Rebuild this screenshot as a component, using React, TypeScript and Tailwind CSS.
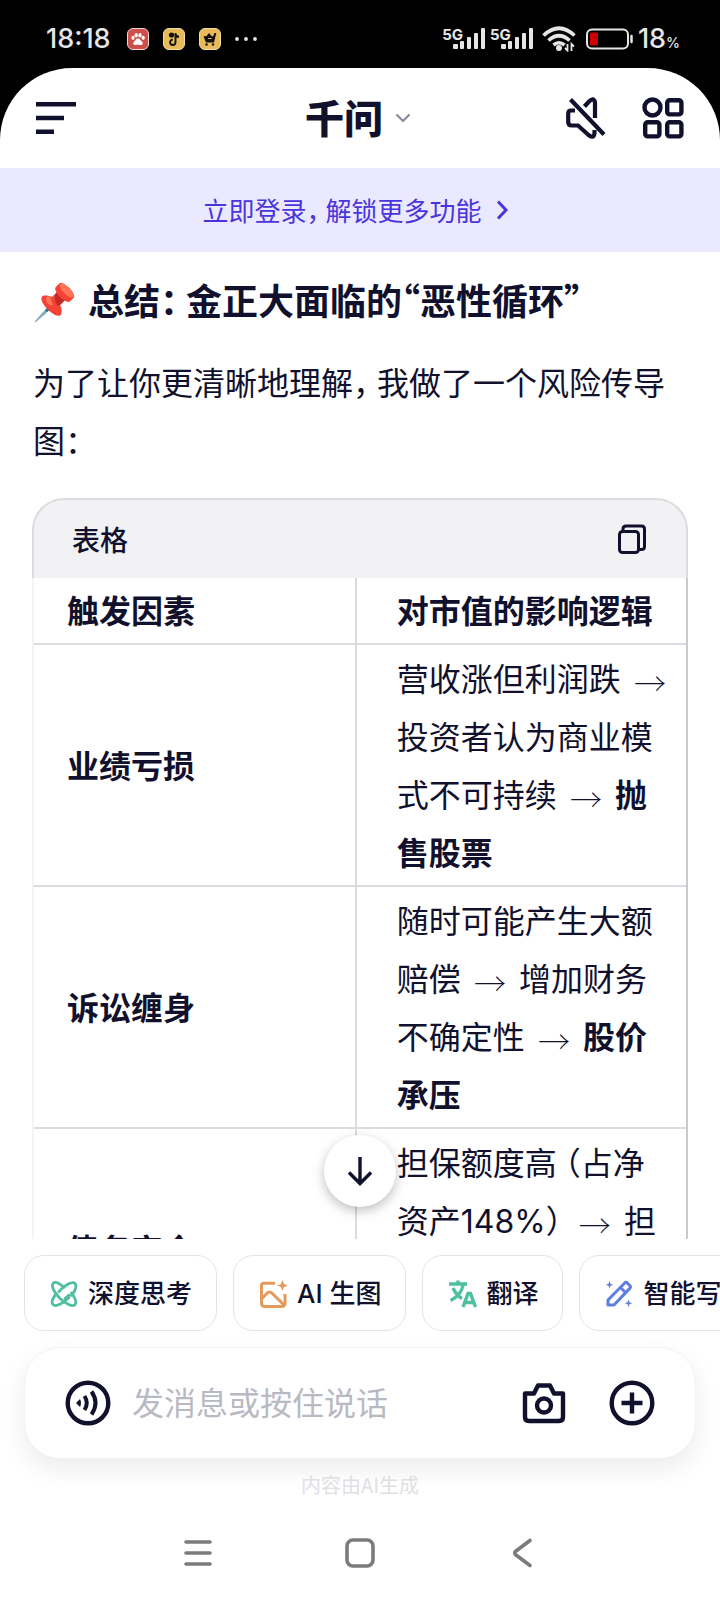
import type { ReactNode } from "react"

const chips = [
    { label: "深度思考", icon: <ThinkIcon /> },
    { label: "AI 生图", icon: <ImageIcon /> },
    { label: "翻译", icon: <TranslateIcon /> },
    { label: "智能写作", icon: <WriteIcon /> },
]

function ThinkIcon() {
    return (
        <svg viewBox="0 0 28 28" className="size-7 shrink-0" fill="none" stroke="#4fbf9f" strokeWidth="2.8" strokeLinecap="round">
            <path d="M9 11.500C13.500 6.500 21.500 .8 24.800 3.200C27.800 6.500 25 11 21.500 15.500" />
            <path d="M19 17.500C13 23.500 6 27.200 3.200 24.800C.8 22.500 3.200 17.500 6.500 13.500" />
            <path d="M14 7.200C10 3.800 5.200 1.200 3.200 3.200C.8 6 4.500 13 10 18.500C15.500 23.500 22.500 27.200 24.800 24.800C27 22.500 24.800 17.500 21.500 13" />
            <path d="M15 18.500L19 15" />
        </svg>
    )
}

function ImageIcon() {
    return (
        <svg viewBox="0 0 28 28" className="size-7 shrink-0" fill="none" stroke="#e59a5c" strokeWidth="3">
            <path d="M16 3.200H4.500a2 2 0 0 0-2 2V23.500a3 3 0 0 0 3 3H23a3 3 0 0 0 3-3V14" />
            <path d="M2.500 19L8 13.200q2.500-2.300 5 0L25 25" />
            <path d="M23.500 0l1.500 4 4 1.500-4 1.500-1.500 4-1.500-4-4-1.500 4-1.500z" fill="#e59a5c" stroke="none" />
        </svg>
    )
}

function TranslateIcon() {
    return (
        <svg viewBox="0 0 28 28" className="size-7 shrink-0 overflow-visible" fill="none" stroke="#4fbf9f" strokeWidth="3.400">
            <path d="M1 4h18M10 .500V4M15.500 4C14 11 9 17.500 2.500 20.500M5 8c2 4.500 5.500 8.500 9 10.500" />
            <path d="M15 27l5-13.500h2.500L27.500 27M17 22.500h8.500" />
        </svg>
    )
}

function WriteIcon() {
    return (
        <svg viewBox="0 0 28 28" className="size-7 shrink-0" fill="none" stroke="#5f7fe0" strokeWidth="3" strokeLinejoin="round">
            <path d="M3 20L19.500 3.200q1.500-1.500 3 0l2.200 2.200q1.500 1.500 0 3L9 25H3zM15.500 7.500l5 5" />
            <path d="M4.500 1l1 2.700 2.700 1-2.700 1-1 2.800-1-2.800-2.700-1 2.700-1zM23.500 19.500l1 2.700 2.700 1-2.700 1-1 2.800-1-2.800-2.700-1 2.700-1z" fill="#5f7fe0" stroke="none" />
        </svg>
    )
}

const Signal = () => (
    <div className="flex items-end">
        <span className="self-start text-[15px] leading-[14px] font-bold">5G</span>
        <svg viewBox="0 0 33 22" className="-ml-2.5 h-[22px] w-[33px]" fill="#e6e6e6">
            <rect x="0" y="16" width="5" height="5" rx="1" />
            <rect x="7" y="13" width="4" height="8" rx="1" />
            <rect x="14" y="9" width="4" height="12" rx="1" />
            <rect x="21" y="5" width="4" height="16" rx="1" />
            <rect x="28" y="0" width="4" height="21" rx="1" />
        </svg>
    </div>
)

const StatusBar = () => (
    <div className="flex h-17 shrink-0 items-center justify-between pt-2.5 pr-10 pl-[46px] text-[#e6e6e6] [font-family:Inter,sans-serif]">
        <div className="flex items-center">
            <span className="w-[66px] text-[27px] leading-7 font-medium">18:18</span>
            <div className="ml-[15px] flex gap-3.5">
                <svg viewBox="0 0 22 22" className="size-[22px]">
                    <rect x=".5" y=".5" width="21" height="21" rx="5.500" fill="#cd4f47" stroke="#f1d5d2" />
                    <g fill="#fff">
                        <ellipse cx="6" cy="9.800" rx="1.600" ry="2.100" />
                        <ellipse cx="9.200" cy="7.300" rx="1.600" ry="2.300" />
                        <ellipse cx="13" cy="7.300" rx="1.600" ry="2.300" />
                        <ellipse cx="16.200" cy="9.800" rx="1.600" ry="2.100" />
                        <path d="M11 10.500c2 0 2.500 2 4 3.200c1.600 1.500.4 3.500-1.300 3.300c-1.800-.3-3.600-.3-5.400 0c-1.700.2-2.900-1.800-1.300-3.300c1.500-1.200 2-3.200 4-3.200z" />
                    </g>
                </svg>
                <svg viewBox="0 0 22 22" className="size-[22px]">
                    <rect x=".5" y=".5" width="21" height="21" rx="5.500" fill="#e8bb58" stroke="#f2dcaa" />
                    <path d="M12.500 5v9.300a2.700 2.700 0 1 1-2.700-2.700M12.500 6.500q1 2.300 3.500 2.300" fill="none" stroke="#111" strokeWidth="1.900" />
                    <circle cx="8.500" cy="7" r="2.600" fill="#111" />
                </svg>
                <svg viewBox="0 0 22 22" className="size-[22px]">
                    <rect x=".5" y=".5" width="21" height="21" rx="5.500" fill="#e8bb58" stroke="#f2dcaa" />
                    <path d="M4.500 8.500l3-.5 2.500-3 2.500 3 1.500.5L15.500 5h1.800L15 14.500H7z" fill="#111" />
                    <circle cx="7.500" cy="16.500" r="1.200" fill="#111" />
                    <circle cx="14" cy="16.500" r="1.200" fill="#111" />
                    <path d="M9 10.500h3.500" stroke="#e8bb58" />
                </svg>
            </div>
            <svg viewBox="0 0 22 4" className="ml-3.5 h-1 w-[22px]" fill="#e6e6e6">
                <circle cx="2" cy="2" r="1.900" />
                <circle cx="11" cy="2" r="1.900" />
                <circle cx="20" cy="2" r="1.900" />
            </svg>
        </div>
        <div className="flex items-center">
            <div className="flex gap-1">
                <Signal />
                <Signal />
            </div>
            <svg viewBox="0 0 34 26" className="ml-2 h-[26px] w-[34px]" fill="none" stroke="#e6e6e6" strokeWidth="3.600">
                <path d="M1.500 9.500Q17-5 32.500 9.500" />
                <path d="M6.500 14.500Q17 5 27.500 14.500" />
                <path d="M11.500 19Q17 14.500 22.500 19" />
                <circle cx="17" cy="22" r="3" fill="#e6e6e6" stroke="none" />
                <path d="M25.500 18v6.500l-2.500-2.500M29.500 25v-7l2.500 2.500" strokeWidth="1.800" />
            </svg>
            <svg viewBox="0 0 48 22" className="ml-2.5 h-[22px] w-12" fill="none">
                <rect x="1" y="1.500" width="41" height="19" rx="5" stroke="#e6e6e6" strokeWidth="2" />
                <rect x="4" y="4.500" width="8" height="13" rx="1.500" fill="#d00000" />
                <path d="M45.500 8v6" stroke="#e6e6e6" strokeWidth="2.500" strokeLinecap="round" />
            </svg>
            <span className="ml-1 flex items-baseline text-[27px] leading-7 font-medium">
                18<span className="text-[14px] leading-4">%</span>
            </span>
        </div>
    </div>
)

const Header = () => (
    <header className="flex h-25 shrink-0 items-center justify-between px-9">
        <div className="flex flex-1">
            <button type="button" aria-label="菜单">
                <svg viewBox="0 0 40 32" className="h-8 w-10" fill="#11112e">
                    <path d="M0 0h40v4.500H0zM0 13.700h28v4.500H0zM0 27.500h18V32H0z" />
                </svg>
            </button>
        </div>
        <button type="button" className="flex items-center gap-3 pr-1">
            <span className="pb-1 text-[39px] leading-[40px] font-black">千问</span>
            <svg viewBox="0 0 16 10" className="h-2.5 w-4" fill="none" stroke="#8b8b9c" strokeWidth="2.200">
                <path d="M1.500 1.500L8 8l6.500-6.500" />
            </svg>
        </button>
        <div className="flex flex-1 items-center justify-end gap-9">
            <button type="button" aria-label="静音">
                <svg viewBox="0 0 40 42" className="h-[42px] w-10" fill="none" stroke="#11112e" strokeWidth="4.200">
                    <path d="M4.500 2.500L38 37.500" />
                    <path d="M18.500 9.500L23 4.500q4.500-4.500 6 .500V21" />
                    <path d="M9 13.500H5Q2.200 13.500 2.200 16.500V25q0 3.500 3.500 3.500H12L22.500 38q5 4 6-1.500V33" />
                </svg>
            </button>
            <button type="button" aria-label="应用">
                <svg viewBox="0 0 42 42" className="size-[42px]" fill="none" stroke="#11112e" strokeWidth="4.400">
                    <circle cx="10.500" cy="10.500" r="8" />
                    <rect x="25.200" y="3.200" width="14.200" height="14.200" rx="2.500" />
                    <rect x="3.200" y="25.200" width="14.200" height="14.200" rx="2.500" />
                    <rect x="25.200" y="25.200" width="14.200" height="14.200" rx="2.500" />
                </svg>
            </button>
        </div>
    </header>
)

const COMMA = "\uFF0C"
const COLON = "\uFF1A"
const LPAREN = "\uFF08"
const RPAREN = "\uFF09"

// Half-width form of full-width punctuation
const Half = ({ children, className = "" }: { children: ReactNode; className?: string }) => (
    <span className={`[font-feature-settings:'halt'] ${className}`}>{children}</span>
)

const Arrow = () => <span className="mx-1.5 inline-block align-[-5px] leading-none font-thin">→</span>

const RiskTable = () => (
    <section className="mt-[30px]">
        <div className="flex h-20 items-center justify-between rounded-t-[32px] border-2 border-b-0 border-[#dcdce0] bg-[#f2f2f5] pr-10 pl-[38px]">
            <span className="text-[28px] leading-8 font-medium">表格</span>
            <button type="button" aria-label="复制">
                <svg viewBox="0 0 28 30" className="h-[30px] w-7" fill="none" stroke="#11112e" strokeWidth="3">
                    <rect x="1.500" y="7.500" width="19" height="21" rx="3" />
                    <path d="M5 7.500V5Q5 2 8 2H23.500q3 0 3 3V22.500q0 3-3 3H20.500" />
                </svg>
            </button>
        </div>
        <table className="w-full table-fixed border-separate border-spacing-0 border-r-2 border-l-2 border-r-[#c9c9d0] border-l-[#f4f4f6] text-left text-[32px] leading-[58px] [&_td]:border-b-2 [&_td]:border-[#dcdce0] [&_th]:border-b-2 [&_th]:border-[#dcdce0]">
            <thead>
                <tr>
                    <th className="w-[49.5%] border-r-2 pt-0.5 pb-[5px] pl-[33px] font-bold">触发因素</th>
                    <th className="pt-0.5 pb-[5px] pl-10 font-bold">对市值的影响逻辑</th>
                </tr>
            </thead>
            <tbody>
                <tr>
                    <th className="border-r-2 pb-0.5 pl-[33px] font-bold">业绩亏损</th>
                    <td className="pt-[3px] pr-2.5 pb-[5px] pl-10">
                        营收涨但利润跌 <Arrow /> 投资者认为商业模式不可持续 <Arrow /> <strong className="font-bold">抛售股票</strong>
                    </td>
                </tr>
                <tr>
                    <th className="border-r-2 pb-0.5 pl-[33px] font-bold">诉讼缠身</th>
                    <td className="pt-[3px] pr-2.5 pb-[5px] pl-10">
                        随时可能产生大额赔偿 <Arrow /> 增加财务不确定性 <Arrow /> <strong className="font-bold">股价承压</strong>
                    </td>
                </tr>
                <tr className="h-[242px]">
                    <th className="border-r-2 pb-0.5 pl-[33px] font-bold">债务安全</th>
                    <td className="pt-[3px] pr-2.5 pb-[5px] pl-10 align-top">
                        担保额度高<Half className="ml-2">{LPAREN}</Half>占净资产<span className="[font-family:Inter,sans-serif]">148%</span>
                        <Half className="mr-1">{RPAREN}</Half> <Arrow /> 担
                    </td>
                </tr>
            </tbody>
        </table>
    </section>
)

const Composer = () => (
    <div className="mx-6 mt-4 flex h-28 items-center rounded-[36px] border border-[#f2f2f4] bg-white px-10 shadow-[0_10px_24px_rgba(0,0,0,0.08)]">
        <button type="button" aria-label="语音">
            <svg viewBox="0 0 46 46" className="size-[46px]" fill="none" stroke="#11112e" strokeWidth="4.400">
                <circle cx="23" cy="23" r="20.300" />
                <path d="M11 23l4-4q2 4 0 8z" fill="#11112e" stroke="none" />
                <path d="M19.500 16q4.500 7 0 14M26.500 11.500q8 11.500 0 23" strokeWidth="4" />
            </svg>
        </button>
        <input type="text" aria-label="消息" placeholder="发消息或按住说话" className="ml-[21px] min-w-0 flex-1 pb-1 text-[32px] leading-10 outline-0 placeholder:text-[#b9b9c4]" />
        <button type="button" aria-label="拍照">
            <svg viewBox="0 0 44 42" className="h-[42px] w-11" fill="none" stroke="#11112e" strokeWidth="4.400" strokeLinejoin="round">
                <path d="M3 11.500H12L16 3.500H28L32 11.500H41V35q0 4-4 4H7q-4 0-4-4z" />
                <circle cx="22" cy="23.500" r="7" />
            </svg>
        </button>
        <button type="button" aria-label="更多" className="ml-[43px]">
            <svg viewBox="0 0 46 46" className="size-[46px]" fill="none" stroke="#11112e" strokeWidth="4.400">
                <circle cx="23" cy="23" r="20.300" />
                <path d="M23 12.500v21M12.500 23h21" />
            </svg>
        </button>
    </div>
)

const NavBar = () => (
    <nav className="mt-[7px] flex h-[94px] items-center justify-between px-[182px]">
        <button type="button" aria-label="最近任务">
            <svg viewBox="0 0 32 32" className="size-8" stroke="#7b7b7b" strokeWidth="3.600" strokeLinecap="round">
                <path d="M4 5h24M4 16h24M4 27h24" />
            </svg>
        </button>
        <button type="button" aria-label="主屏幕">
            <svg viewBox="0 0 32 32" className="size-8" fill="none" stroke="#7b7b7b" strokeWidth="3.600">
                <rect x="3" y="3" width="26" height="26" rx="6" />
            </svg>
        </button>
        <button type="button" aria-label="返回">
            <svg viewBox="0 0 32 32" className="size-8" fill="none" stroke="#7b7b7b" strokeWidth="3.600" strokeLinecap="round" strokeLinejoin="round">
                <path d="M24 3.500L10 14q-2.500 2 0 4L24 28.500" />
            </svg>
        </button>
    </nav>
)

const App = () => {
    return (
        <div lang="zh-CN" className="flex h-screen flex-col overflow-hidden bg-black text-[#11112e] [font-family:'Noto_Sans_CJK_SC','Noto_Sans',sans-serif]">
            <StatusBar />
            <div className="flex min-h-0 flex-1 flex-col rounded-t-[72px] bg-white">
                <Header />
                <a href="#login" className="flex h-21 shrink-0 items-center justify-center gap-3 bg-[#ebe9ff] pr-1 text-[26px] leading-8 text-[#4a35dc]">
                    <span>
                        立即登录<Half className="mr-1.5">{COMMA}</Half>解锁更多功能
                    </span>
                    <svg viewBox="0 0 20 20" className="size-5" fill="none" stroke="#4a35dc" strokeWidth="3">
                        <path d="M4 1.500l8 8.500-8 8.500" />
                    </svg>
                </a>
                <div className="relative min-h-0 flex-1">
                    <main className="h-full overflow-hidden px-8">
                        <h1 className="flex items-center gap-[11px] pt-[22px] text-[36px] leading-[50px] font-bold">
                            <span>📌</span>
                            <span>
                                总结<Half className="mr-2">{COLON}</Half>金正大面临的<Half>“</Half>恶性循环<Half>”</Half>
                            </span>
                        </h1>
                        <p className="mt-7 pl-px text-[32px] leading-[58px]">
                            为了让你更清晰地理解<Half className="mr-2">{COMMA}</Half>我做了一个风险传导图<Half>{COLON}</Half>
                        </p>
                        <RiskTable />
                    </main>
                    <button type="button" aria-label="滚动到底部" className="absolute bottom-8 left-1/2 flex size-18 -translate-x-1/2 items-center justify-center rounded-full bg-white shadow-[0_4px_12px_rgba(0,0,0,0.25)]">
                        <svg viewBox="0 0 26 30" className="h-[30px] w-[26px]" fill="none" stroke="#11112e" strokeWidth="3.400">
                            <path d="M13 1v26M2 16.500l11 11 11-11" />
                        </svg>
                    </button>
                </div>
                <footer className="shrink-0">
                    <div className="flex gap-4 overflow-hidden pt-4 pl-6 [font-family:Inter,'Noto_Sans_CJK_SC',sans-serif]">
                        {chips.map((chip) => (
                            <button key={chip.label} type="button" className="flex h-19 shrink-0 items-center gap-2.5 rounded-[20px] border border-[#e4e4e8] pt-0.5 pr-6 pl-[25px] text-[26px] leading-8 font-medium">
                                {chip.icon}
                                <span>{chip.label}</span>
                            </button>
                        ))}
                    </div>
                    <Composer />
                    <p className="mt-3 text-center text-[20px] leading-7 text-[#e0e0e4]">内容由AI生成</p>
                    <NavBar />
                </footer>
            </div>
        </div>
    )
}

export default App
